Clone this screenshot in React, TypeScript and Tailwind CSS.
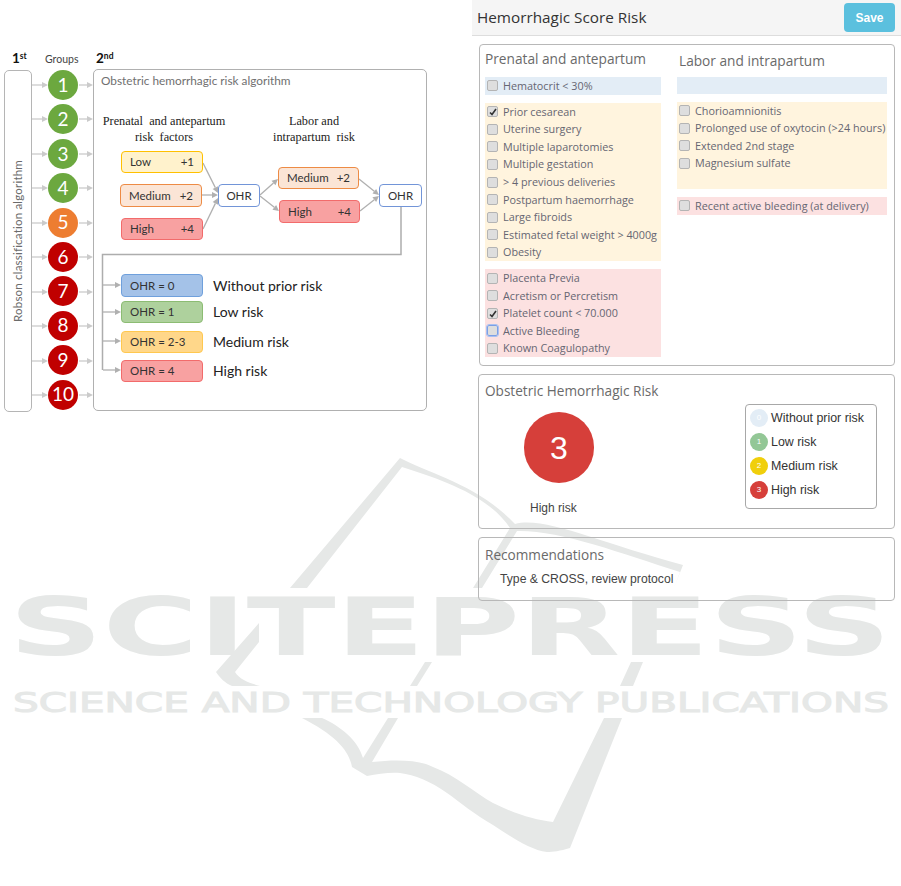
import React from 'react';

const CALIBRI = 'font-["Lato","Open_Sans",sans-serif]';
const OPEN = 'font-["Open_Sans",sans-serif]';
const ARIAL = 'font-["Liberation_Sans",Arial,sans-serif]';
const TIMES = 'font-["Liberation_Serif",serif]';

const GROUPS: { n: number; color: string }[] = [
  { n: 1, color: 'bg-[#6ca83f]' },
  { n: 2, color: 'bg-[#6ca83f]' },
  { n: 3, color: 'bg-[#6ca83f]' },
  { n: 4, color: 'bg-[#6ca83f]' },
  { n: 5, color: 'bg-[#ed7d31]' },
  { n: 6, color: 'bg-[#c00000]' },
  { n: 7, color: 'bg-[#c00000]' },
  { n: 8, color: 'bg-[#c00000]' },
  { n: 9, color: 'bg-[#c00000]' },
  { n: 10, color: 'bg-[#c00000]' },
];
const GROUP_Y = [85, 119, 154, 188, 223, 257, 292, 326, 361, 395];

function Arrow({ x1, y1, x2, y2, color = '#b0b0b0' }: { x1: number; y1: number; x2: number; y2: number; color?: string }) {
  const a = Math.atan2(y2 - y1, x2 - x1);
  const len = 6;
  const w = 3;
  const bx = x2 - len * Math.cos(a);
  const by = y2 - len * Math.sin(a);
  const px = -Math.sin(a) * w;
  const py = Math.cos(a) * w;
  return (
    <g>
      <line x1={x1} y1={y1} x2={bx} y2={by} stroke={color} strokeWidth={1.3} />
      <polygon points={`${x2},${y2} ${bx + px},${by + py} ${bx - px},${by - py}`} fill={color} />
    </g>
  );
}

function Connectors() {
  return (
    <svg className="absolute left-0 top-0 w-[440px] h-[420px]" viewBox="0 0 440 420" fill="none">
      {GROUP_Y.map((y) => (
        <g key={y}>
          <Arrow x1={32} y1={y} x2={48} y2={y} color="#cbcbcb" />
          <Arrow x1={79} y1={y} x2={93} y2={y} color="#cbcbcb" />
        </g>
      ))}
      <Arrow x1={203} y1={163} x2={218} y2={193} />
      <Arrow x1={202} y1={195} x2={218} y2={195} />
      <Arrow x1={203} y1={229} x2={218} y2={198} />
      <Arrow x1={260} y1={195} x2={278} y2={179} />
      <Arrow x1={260} y1={196} x2={279} y2={211} />
      <Arrow x1={359} y1={179} x2={379} y2={195} />
      <Arrow x1={360} y1={211} x2={379} y2={196} />
      <path d="M401 206V254.5H102.500V370" stroke="#adadad" strokeWidth={1.5} />
      {[285, 312, 341, 370].map((y) => (
        <Arrow key={y} x1={103} y1={y} x2={121} y2={y} />
      ))}
    </svg>
  );
}

function ScoreBox({ className, label, score }: { className: string; label: string; score?: string }) {
  return (
    <div className={`flex items-center justify-between rounded-[4px] border px-2 text-[11.5px] text-[#333] ${className}`}>
      <span>{label}</span>
      {score && <span>{score}</span>}
    </div>
  );
}

const OUTCOMES = [
  { label: 'OHR = 0', text: 'Without prior risk', box: 'h-[23px] bg-[#a4c2e8] border-[#6fa0dc]', row: '' },
  { label: 'OHR = 1', text: 'Low risk', box: 'h-[22px] bg-[#aed19d] border-[#8cbc73]', row: 'mt-[4px]' },
  { label: 'OHR = 2-3', text: 'Medium risk', box: 'h-[22px] bg-[#ffd78a] border-[#ffc84f]', row: 'mt-[8px]' },
  { label: 'OHR = 4', text: 'High risk', box: 'h-[22px] bg-[#f8a1a1] border-[#f26b6b]', row: 'mt-[7px]' },
];

function Diagram() {
  return (
    <div className={`relative h-[420px] ${CALIBRI}`}>
      <span className="absolute left-[12px] top-[48px] text-[13.5px] font-bold text-[#111]">
        1<sup className="text-[8.5px]">st</sup>
      </span>
      <span className="absolute left-[45px] top-[52px] text-[10.5px] text-[#444]">Groups</span>
      <span className="absolute left-[96px] top-[48px] text-[13.5px] font-bold text-[#111]">
        2<sup className="text-[8.5px]">nd</sup>
      </span>

      <Connectors />

      <div className="absolute left-[4px] top-[70px] w-[28px] h-[342px] rounded-[5px] border border-[#b5b5b5] flex items-center justify-center">
        <span className="[writing-mode:vertical-rl] rotate-180 text-[11.5px] tracking-[0.2px] text-[#6b6b6b]">
          Robson classification algorithm
        </span>
      </div>

      <div className="absolute left-[48px] top-[70px] flex flex-col gap-[4.4px]">
        {GROUPS.map((g) => (
          <div key={g.n} className={`w-[30px] h-[30px] rounded-full flex items-center justify-center text-[19px] text-white ${g.color}`}>
            {g.n}
          </div>
        ))}
      </div>

      <div className="absolute left-[93px] top-[69px] w-[334px] h-[342px] rounded-[5px] border border-[#b0b0b0]">
        <span className="absolute left-[7px] top-[2px] text-[11.8px] text-[#707070] whitespace-nowrap">Obstetric hemorrhagic risk algorithm</span>
      </div>

      <div className={`absolute left-[84px] top-[113px] w-[160px] text-center text-[12.3px] leading-[16px] text-[#222] ${TIMES}`}>
        Prenatal&nbsp; and antepartum
        <br />
        risk&nbsp; factors
      </div>
      <div className={`absolute left-[254px] top-[113px] w-[120px] text-center text-[12.3px] leading-[16px] text-[#222] ${TIMES}`}>
        Labor and
        <br />
        intrapartum&nbsp; risk
      </div>

      <ScoreBox className="absolute left-[121px] top-[151px] w-[82px] h-[22px] bg-[#fff2cc] border-[#ffc000]" label="Low" score="+1" />
      <ScoreBox className="absolute left-[120px] top-[184px] w-[82px] h-[23px] bg-[#fbe5d6] border-[#ed8b45]" label="Medium" score="+2" />
      <ScoreBox className="absolute left-[121px] top-[218px] w-[82px] h-[22px] bg-[#f8a1a1] border-[#f26b6b]" label="High" score="+4" />
      <ScoreBox className="absolute left-[218px] top-[184px] w-[42px] h-[23px] bg-white border-[#7295d8] justify-center" label="OHR" />
      <ScoreBox className="absolute left-[278px] top-[167px] w-[81px] h-[22px] bg-[#fbe5d6] border-[#ed8b45]" label="Medium" score="+2" />
      <ScoreBox className="absolute left-[279px] top-[200px] w-[81px] h-[23px] bg-[#f8a1a1] border-[#f26b6b]" label="High" score="+4" />
      <ScoreBox className="absolute left-[379px] top-[184px] w-[43px] h-[23px] bg-white border-[#7295d8] justify-center" label="OHR" />

      <div className="absolute left-[121px] top-[274px] flex flex-col">
        {OUTCOMES.map((o) => (
          <div key={o.label} className={`flex items-center gap-[10px] ${o.row}`}>
            <ScoreBox className={`w-[82px] ${o.box}`} label={o.label} />
            <span className="text-[14px] leading-[20px] text-[#222] whitespace-nowrap">{o.text}</span>
          </div>
        ))}
      </div>
    </div>
  );
}

function Check({ checked, focused }: { checked?: boolean; focused?: boolean }) {
  return (
    <span
      className={`relative shrink-0 w-[11px] h-[11px] rounded-[2px] border bg-[#dedede] ${
        focused ? 'border-[#7c9fe6] outline outline-[#a9c1f0]' : 'border-[#b4b4b4]'
      }`}
    >
      {checked && (
        <svg className="absolute left-[1px] top-[1px] w-[8px] h-[8px]" viewBox="0 0 8 8" fill="none">
          <path d="M1 4.500L3 6.500L7 1" stroke="#333" strokeWidth={1.6} />
        </svg>
      )}
    </span>
  );
}

type Item = { label: string; checked?: boolean; focused?: boolean };

function Band({ items, className }: { items: Item[]; className: string }) {
  return (
    <div className={className}>
      {items.map((it) => (
        <div key={it.label} className="flex items-center gap-[5px] h-[17.6px] pl-[2px] whitespace-nowrap">
          <Check checked={it.checked} focused={it.focused} />
          <span>{it.label}</span>
        </div>
      ))}
    </div>
  );
}

const MIDDLE: Item[] = [
  { label: 'Prior cesarean', checked: true },
  { label: 'Uterine surgery' },
  { label: 'Multiple laparotomies' },
  { label: 'Multiple gestation' },
  { label: '> 4 previous deliveries' },
  { label: 'Postpartum haemorrhage' },
  { label: 'Large fibroids' },
  { label: 'Estimated fetal weight > 4000g' },
  { label: 'Obesity' },
];
const HIGH: Item[] = [
  { label: 'Placenta Previa' },
  { label: 'Acretism or Percretism' },
  { label: 'Platelet count < 70.000', checked: true },
  { label: 'Active Bleeding', focused: true },
  { label: 'Known Coagulopathy' },
];
const LABOR: Item[] = [
  { label: 'Chorioamnionitis' },
  { label: 'Prolonged use of oxytocin (>24 hours)' },
  { label: 'Extended 2nd stage' },
  { label: 'Magnesium sulfate' },
];

const LEGEND = [
  { n: 0, label: 'Without prior risk', color: 'bg-[#e3edf6]' },
  { n: 1, label: 'Low risk', color: 'bg-[#93c796]' },
  { n: 2, label: 'Medium risk', color: 'bg-[#f0cf0c]' },
  { n: 3, label: 'High risk', color: 'bg-[#d63f3a]' },
];

function ScorePanel() {
  return (
    <div className="w-[429px]">
      <div className="h-[36px] flex items-center justify-between pl-[5px] pr-[6px] bg-[#f5f5f5] border-b border-[#ddd]">
        <span className={`text-[15.3px] text-[#333] ${OPEN}`}>Hemorrhagic Score Risk</span>
        <span className={`w-[51px] h-[29px] rounded-[4px] bg-[#5bc0de] flex items-center justify-center text-[12px] font-bold text-white ${ARIAL}`}>
          Save
        </span>
      </div>

      <div className={`mt-[8px] ml-[7px] mr-[6px] h-[322px] rounded-[4px] border border-[#b8b8b8] pl-[5px] flex gap-[16px] text-[10.8px] text-[#666672] ${OPEN}`}>
        <div className="w-[176px]">
          <div className="h-[32px] pt-[4px] text-[13.7px] text-[#6a6a6a] whitespace-nowrap">Prenatal and antepartum</div>
          <Band items={[{ label: 'Hematocrit < 30%' }]} className="bg-[#e3edf6] h-[18px]" />
          <Band items={MIDDLE} className="mt-[8px] bg-[#fff4de]" />
          <Band items={HIGH} className="mt-[8px] bg-[#fce1e1]" />
        </div>
        <div className="w-[210px]">
          <div className="h-[32px] pt-[6px] pl-[2px] text-[13.7px] text-[#6a6a6a] whitespace-nowrap">Labor and intrapartum</div>
          <div className="bg-[#e3edf6] h-[17px]" />
          <Band items={LABOR} className="mt-[8px] bg-[#fff4de] h-[87px]" />
          <Band items={[{ label: 'Recent active bleeding (at delivery)' }]} className="mt-[8px] bg-[#fce1e1] h-[18px]" />
        </div>
      </div>

      <div className="mt-[8px] ml-[6px] mr-[6px] h-[155px] rounded-[4px] border border-[#b8b8b8] relative flex justify-between">
        <div className="pl-[6px]">
          <div className={`pt-[6px] text-[13.6px] text-[#6a6a6a] ${OPEN}`}>Obstetric Hemorrhagic Risk</div>
          <div className={`mt-[11px] ml-[39px] w-[70px] h-[71px] rounded-full bg-[#d63f3a] flex items-center justify-center text-[32px] text-white ${ARIAL}`}>3</div>
          <div className={`mt-[16px] ml-[45px] text-[12px] text-[#444] ${ARIAL}`}>High risk</div>
        </div>
        <div className={`mt-[29px] mr-[17px] w-[132px] h-[105px] rounded-[4px] border border-[#a8a8a8] pl-[4px] pt-[4px] flex flex-col gap-[6px] text-[12.4px] text-[#333] ${ARIAL}`}>
          {LEGEND.map((l) => (
            <div key={l.n} className="flex items-center gap-[3px] h-[18px]">
              <span className={`w-[18px] h-[18px] rounded-full flex items-center justify-center text-[8px] text-white ${l.color}`}>{l.n}</span>
              <span>{l.label}</span>
            </div>
          ))}
        </div>
      </div>

      <div className="mt-[8px] ml-[6px] mr-[6px] h-[64px] rounded-[4px] border border-[#b8b8b8] pl-[6px]">
        <div className={`pt-[7px] text-[13.6px] text-[#6a6a6a] ${OPEN}`}>Recommendations</div>
        <div className={`mt-[5px] ml-[15px] text-[12.2px] text-[#444] ${ARIAL}`}>Type &amp; CROSS, review protocol</div>
      </div>
    </div>
  );
}

function Watermark() {
  return (
    <svg className="absolute left-0 top-0 w-[901px] h-[886px] pointer-events-none" viewBox="0 0 901 886" fill="#e6e8e7">
      {/* upper part of the book */}
      <path d="M290 588L400 458C430 474 477 484 515 524C545 516 600 543 683 565L674 588L680 572C620 553 560 530 517 531L482 588L473 588L510 528C490 498 450 482 402 467L307 588Z" />
      <path d="M259 623V642L235 672C240 680 250 683 260 686H232C225 683 220 678 216 672Z" />
      <path d="M438 641H445L438 652Z" />
      <path d="M425 662H432L417 686H410Z" />
      <path d="M631 662H643L633 686H620Z" />
      {/* lower part of the book */}
      <path d="M302 718H322C340 726 358 740 363 758L388 718H398L372 762C397 759 420 760 433 767C455 775 475 793 493 803C515 814 535 820 553 822L604 718H622L570 848C560 851 553 852 547 852C530 850 510 836 493 825C475 815 460 802 447 793C430 781 415 775 400 773C390 772 378 774 367 776L352 767C349 750 335 735 302 718Z" />
      <text x="9" y="655" fontFamily="DejaVu Sans" fontWeight="700" fontSize="80" textLength="882" lengthAdjust="spacingAndGlyphs">
        SCITEPRESS
      </text>
      <text x="13" y="712" fontFamily="DejaVu Sans" fontWeight="400" fontSize="26" stroke="#e6e8e7" strokeWidth="1" textLength="876" lengthAdjust="spacingAndGlyphs">
        SCIENCE AND TECHNOLOGY PUBLICATIONS
      </text>
    </svg>
  );
}

export default function App() {
  return (
    <div className="relative w-[901px] h-[886px] bg-white overflow-hidden">
      <Watermark />
      <div className="relative flex">
        <div className="w-[472px]">
          <Diagram />
        </div>
        <ScorePanel />
      </div>
    </div>
  );
}
